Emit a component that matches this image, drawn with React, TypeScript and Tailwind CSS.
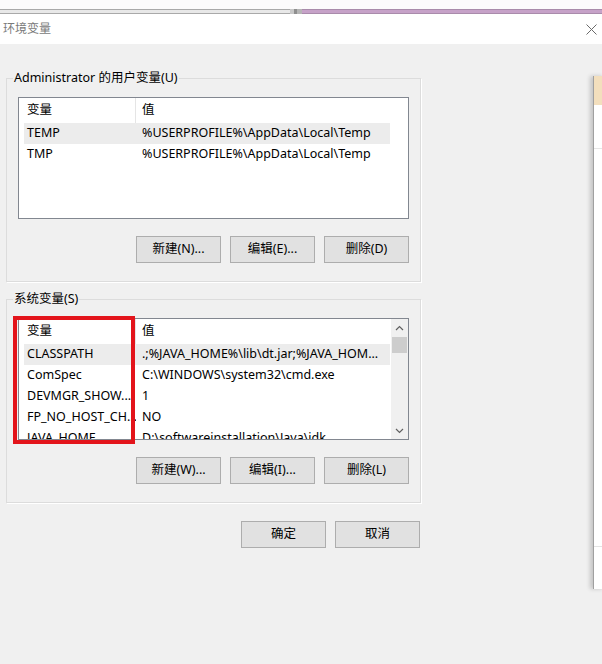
import React from "react"

type Row = { name: string; value: string; selected?: boolean }

const userVars: Row[] = [
  { name: "TEMP", value: "%USERPROFILE%\\AppData\\Local\\Temp", selected: true },
  { name: "TMP", value: "%USERPROFILE%\\AppData\\Local\\Temp" },
]

const sysVars: Row[] = [
  { name: "CLASSPATH", value: ".;%JAVA_HOME%\\lib\\dt.jar;%JAVA_HOM...", selected: true },
  { name: "ComSpec", value: "C:\\WINDOWS\\system32\\cmd.exe" },
  { name: "DEVMGR_SHOW...", value: "1" },
  { name: "FP_NO_HOST_CH...", value: "NO" },
  { name: "JAVA_HOME", value: "D:\\softwareinstallation\\Java\\jdk" },
]

function Chevron({ up }: { up?: boolean }) {
  return (
    <svg width="9" height="6" viewBox="0 0 9 6">
      <polyline
        points={up ? "1,5 4.5,1.5 8,5" : "1,1 4.5,4.5 8,1"}
        fill="none"
        stroke="#606060"
        strokeWidth="1.2"
      />
    </svg>
  )
}

function VarList({ rows, scroll }: { rows: Row[]; scroll?: boolean }) {
  return (
    <div className="h-[122px] border border-[#828790] bg-white flex overflow-hidden">
      <div className="flex-1 pl-[5px]">
        <div className="flex h-[25px] w-[366px]">
          <div className="w-[112px] pl-[3px] border-r border-[#e5e5e5] flex items-center">变量</div>
          <div className="flex-1 pl-[6px] flex items-center">值</div>
        </div>
        {rows.map((r) => (
          <div
            key={r.name}
            className={`flex h-[21px] w-[366px] items-center ${r.selected ? "bg-[#ececec]" : ""}`}
          >
            <div className="w-[112px] pl-[3px] whitespace-nowrap overflow-hidden">{r.name}</div>
            <div className="flex-1 pl-[6px] whitespace-nowrap overflow-hidden">{r.value}</div>
          </div>
        ))}
      </div>
      {scroll && (
        <div className="w-[17px] bg-[#f0f0f0] flex flex-col">
          <div className="h-[17px] flex items-center justify-center">
            <Chevron up />
          </div>
          <div className="flex-1 pt-[1px]">
            <div className="h-[16px] mx-[1px] bg-[#cdcdcd]" />
          </div>
          <div className="h-[17px] flex items-center justify-center">
            <Chevron />
          </div>
        </div>
      )}
    </div>
  )
}

function WinButton({ children }: { children: React.ReactNode }) {
  return (
    <button className="w-[85px] h-[27px] border border-[#adadad] bg-[#e1e1e1] text-[12.5px] text-black">
      {children}
    </button>
  )
}

function Group({
  title,
  className,
  children,
}: {
  title: string
  className?: string
  children: React.ReactNode
}) {
  return (
    <fieldset
      className={`w-[415px] border border-[#dcdcdc] pl-[6px] pr-[11px] pb-[18px] shadow-[1px_1px_0_#ffffff] ${className ?? ""}`}
    >
      <legend className="px-[1px] leading-[16px]">{title}</legend>
      {children}
    </fieldset>
  )
}

export default function App() {
  return (
    <div
      className="w-[602px] h-[664px] bg-[#f0f0f0] flex flex-col overflow-hidden text-[12.5px] text-black"
      style={{ fontFamily: '"Noto Sans", "Noto Sans CJK SC", sans-serif' }}
    >
      {/* strip of the window behind */}
      <div className="h-[14px] bg-[#fcfbfc] pt-[9px]">
        <div className="h-[5px] flex">
          <div className="w-[290px] bg-[#e8e8e8] border-y border-[#a9a9a9]" />
          <div className="w-[4px] bg-[#c8c8c8]" />
          <div className="w-[3px] bg-[#8f8f8f]" />
          <div className="w-[5px] bg-[#b5b5b5]" />
          <div className="flex-1 bg-[#c6a2c8] border-y border-[#a98bab]" />
        </div>
      </div>

      {/* title bar */}
      <div className="h-[30px] bg-white flex items-center justify-between pl-[3px] pr-[5px]">
        <span className="text-[#7a7a7a] text-[12px]">环境变量</span>
        <svg width="11" height="11" viewBox="0 0 11 11">
          <path d="M0.5 0.5 L10.5 10.5 M10.5 0.5 L0.5 10.5" stroke="#6a6a6a" strokeWidth="1" />
        </svg>
      </div>

      <div className="flex-1 relative">
        <div className="pl-[6px]">
          <Group title="Administrator 的用户变量(U)" className="mt-[26px]">
            <div className="ml-[5px] mt-[11px]">
              <VarList rows={userVars} />
              <div className="mt-[17px] flex justify-end gap-[9px]">
                <WinButton>新建(N)...</WinButton>
                <WinButton>编辑(E)...</WinButton>
                <WinButton>删除(D)</WinButton>
              </div>
            </div>
          </Group>

          <Group title="系统变量(S)" className="mt-[9px]">
            <div className="ml-[5px] mt-[11px]">
              <div className="relative">
                <VarList rows={sysVars} scroll />
                <div className="absolute left-[-5px] top-[-2px] w-[122px] h-[128px] border-4 border-[#e3141b]" />
              </div>
              <div className="mt-[17px] flex justify-end gap-[9px]">
                <WinButton>新建(W)...</WinButton>
                <WinButton>编辑(I)...</WinButton>
                <WinButton>删除(L)</WinButton>
              </div>
            </div>
          </Group>

          <div className="w-[415px] mt-[18px] flex justify-end gap-[9px] pr-[1px]">
            <WinButton>确定</WinButton>
            <WinButton>取消</WinButton>
          </div>
        </div>

        {/* edge of another window on the desktop */}
        <div className="absolute left-[593px] top-[32px] w-[12px] h-[513px] bg-white border-l border-[#a0a0a0] shadow-[-3px_0_4px_rgba(0,0,0,0.18)] flex flex-col">
          <div className="h-[29px] bg-[#f3dfbd]" />
          <div className="h-[44px] border-b border-[#e6e6e6]" />
          <div className="flex-1" />
          <div className="h-[43px] border-t border-[#e3e3e3]" />
        </div>
      </div>
    </div>
  )
}
